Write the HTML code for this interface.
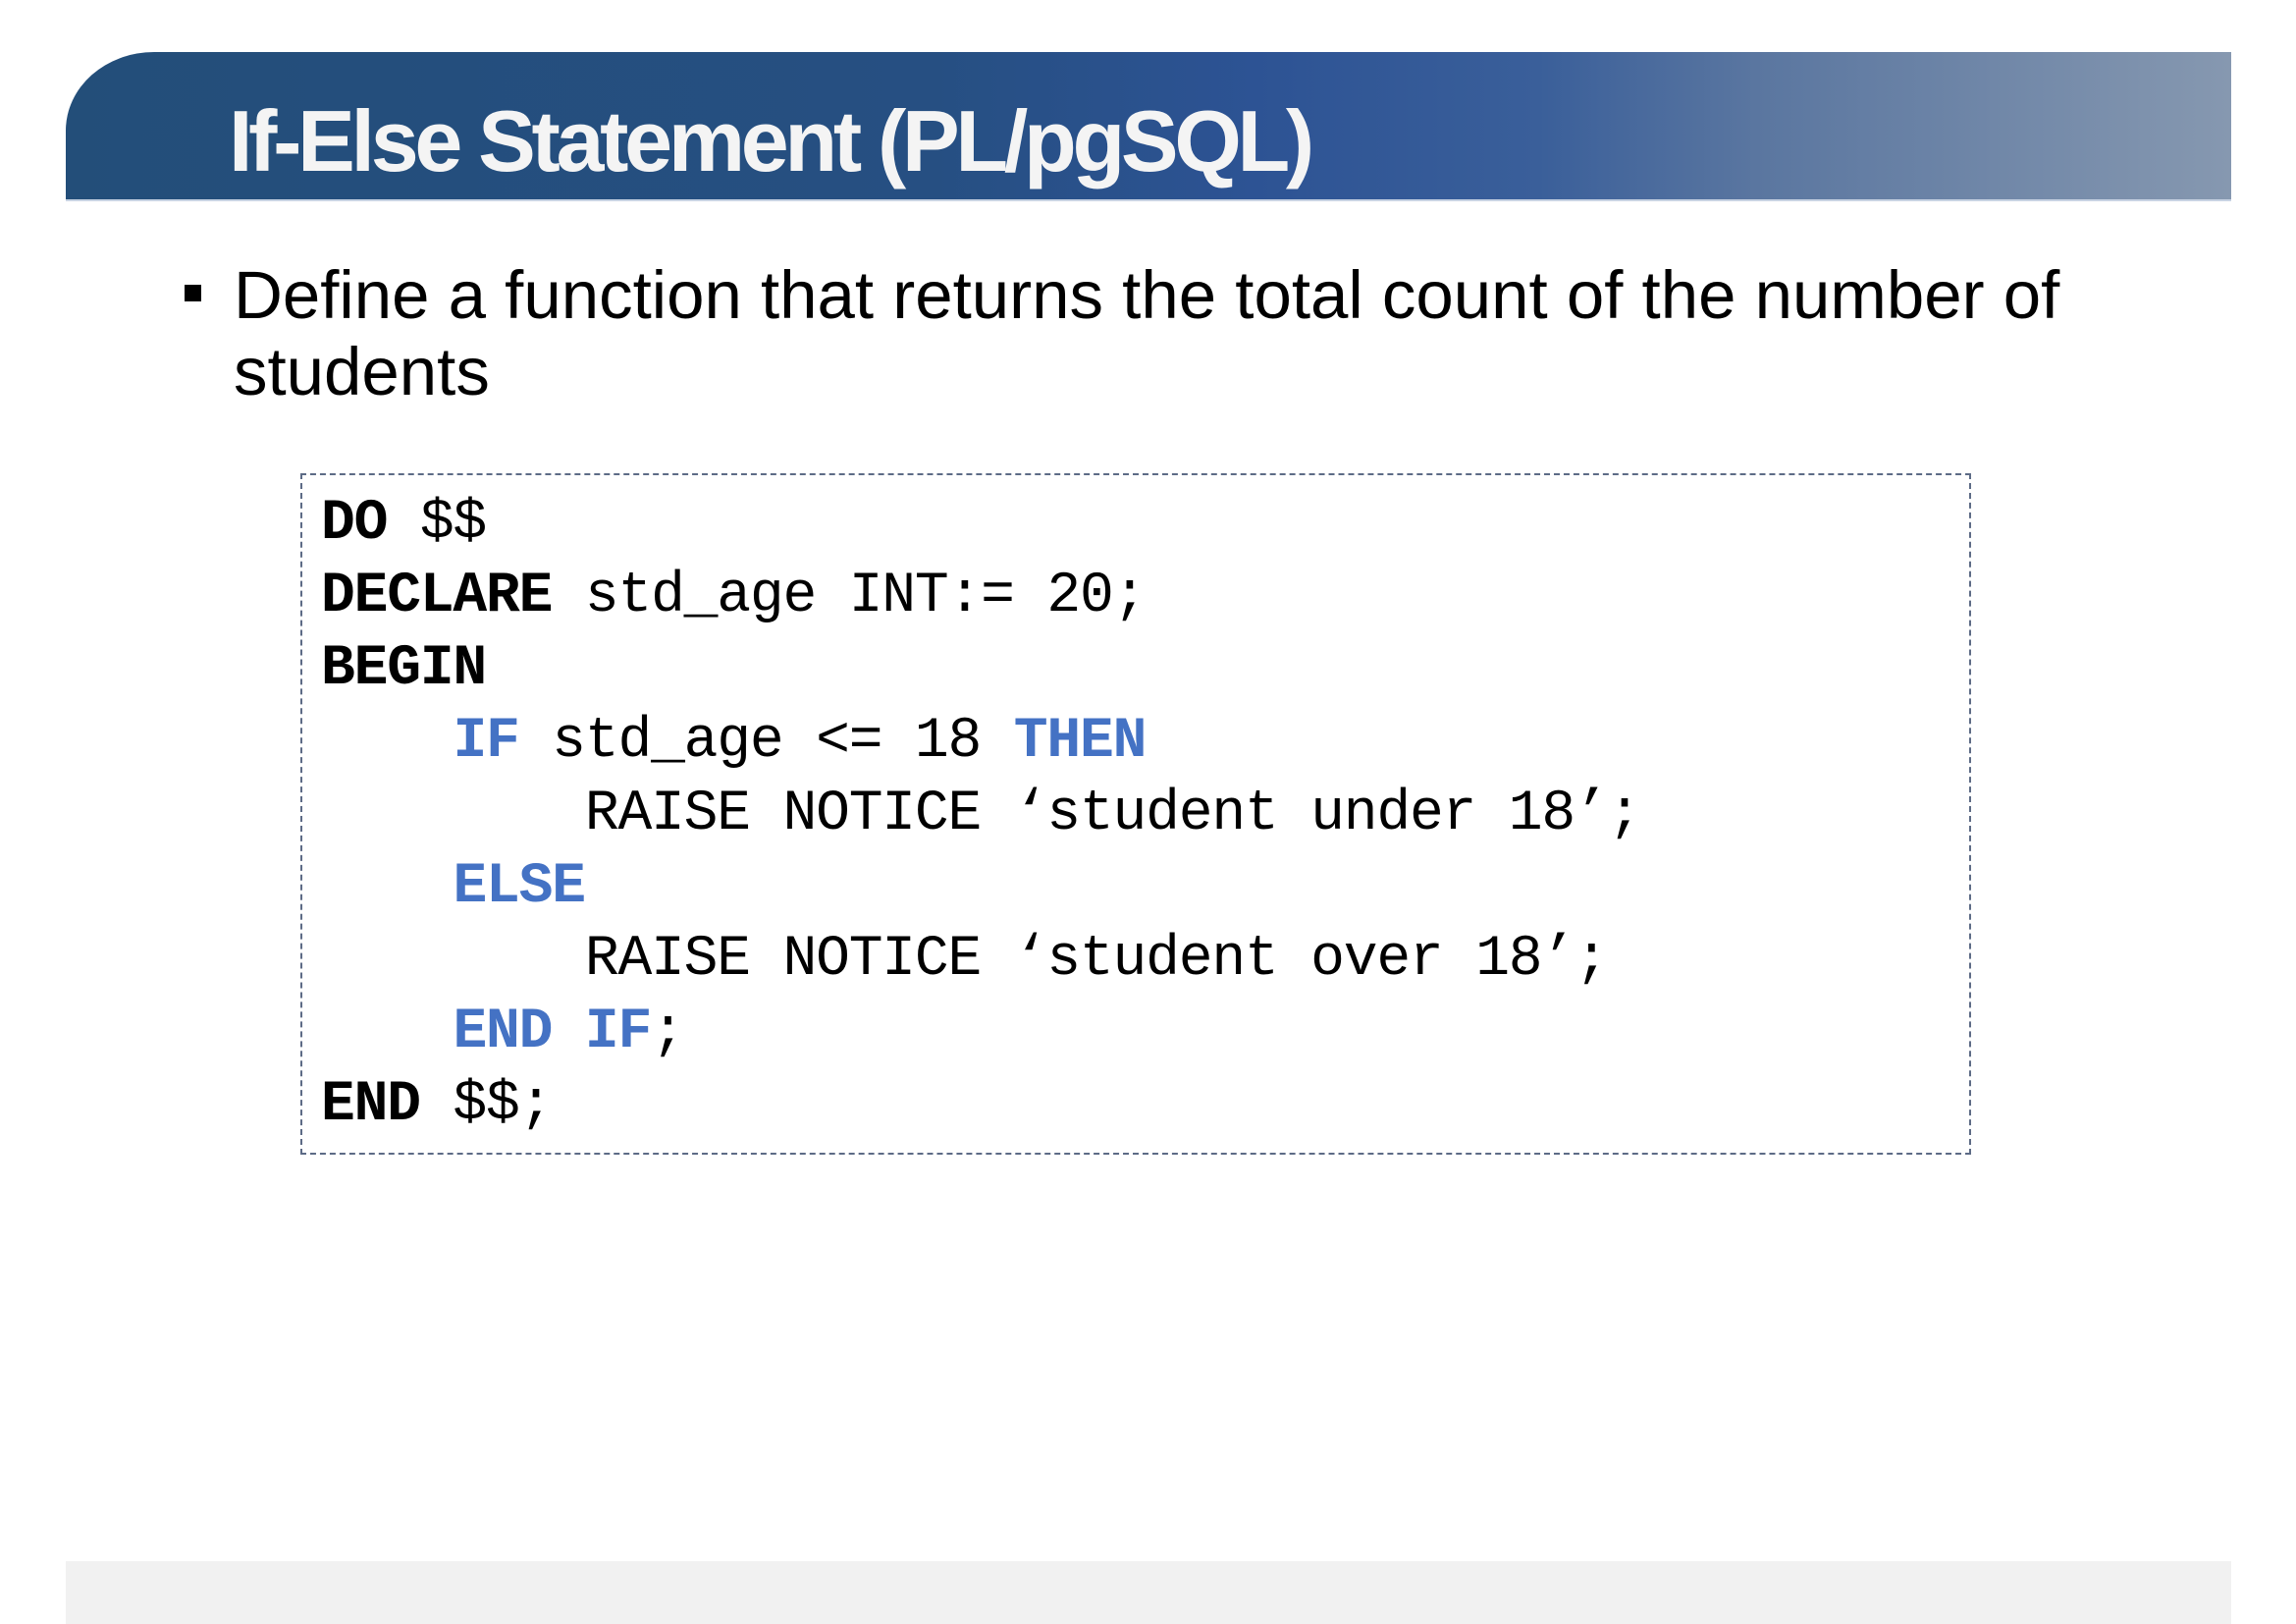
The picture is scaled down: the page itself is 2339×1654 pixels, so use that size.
<!DOCTYPE html>
<html><head><meta charset="utf-8"><style>
html,body{margin:0;padding:0;background:#fff;}
body{width:2339px;height:1654px;position:relative;overflow:hidden;}
.hdr{position:absolute;left:67px;top:53px;width:2206px;height:152px;border-top-left-radius:90px 80px;
background:linear-gradient(to right,#234e79 0%,#264f82 40%,#2d5394 55%,#3a5f9a 68%,#5a76a0 78%,#8698b0 100%);border-bottom:2px solid #c8d3e3;box-sizing:border-box;}
.title{position:absolute;left:233px;top:94px;font-family:"Liberation Sans",sans-serif;font-weight:bold;font-size:88px;color:#f4f4f4;letter-spacing:-4.3px;line-height:100px;white-space:nowrap;}
.bullet{position:absolute;left:188px;top:290px;width:17px;height:17px;background:#000;}
.txt{position:absolute;left:238px;top:262px;font-family:"Liberation Sans",sans-serif;font-size:69px;line-height:78px;color:#000;width:1920px;}
.box{position:absolute;left:306px;top:482px;width:1702px;height:694px;border:2px dashed #5d6b86;box-sizing:border-box;}
pre{position:absolute;left:327px;top:497px;margin:0;font-family:"Liberation Mono",monospace;font-size:58px;letter-spacing:-1.2px;line-height:74px;color:#000;}
b{font-weight:bold;}
.k{color:#4472c4;font-weight:bold;}
.foot{position:absolute;left:67px;top:1590px;width:2206px;height:64px;background:#f1f1f1;}
</style></head><body>
<div class="hdr"></div>
<div class="title">If-Else Statement (PL/pgSQL)</div>
<div class="bullet"></div>
<div class="txt">Define a function that returns the total count of the number of students</div>
<div class="box"></div>
<pre><b>DO</b> $$
<b>DECLARE</b> std_age INT:= 20;
<b>BEGIN</b>
    <span class="k">IF</span> std_age &lt;= 18 <span class="k">THEN</span>
        RAISE NOTICE ‘student under 18’;
    <span class="k">ELSE</span>
        RAISE NOTICE ‘student over 18’;
    <span class="k">END IF</span>;
<b>END</b> $$;</pre>
<div class="foot"></div>
</body></html>
